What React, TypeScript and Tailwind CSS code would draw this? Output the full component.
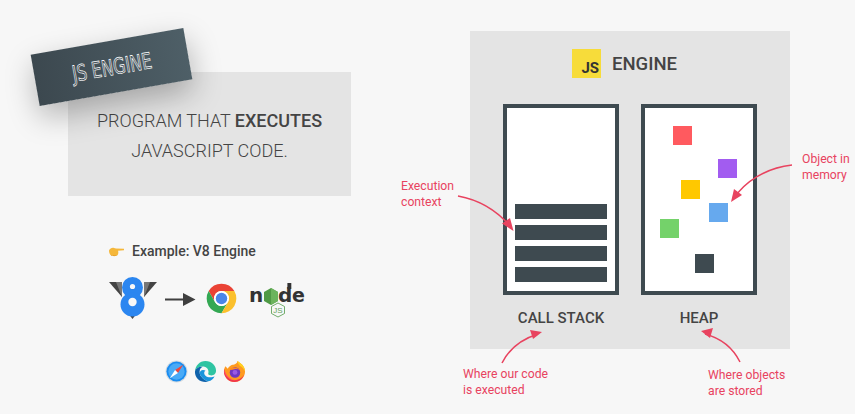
const RED = "#e8435f";

function V8() {
  return (
    <svg width="48" height="42" viewBox="109 278 48 42">
      <path d="M109 283h13v15z" fill="#444" />
      <path d="M157 283h-13v15z" fill="#444" />
      <path d="M116 283h6v15z" fill="#777" />
      <path d="M150 283h-6v15z" fill="#777" />
      <path d="M128 314h9l-4.500 6z" fill="#444" />
      <circle cx="132.500" cy="288.500" r="10.500" fill="#2b86f0" />
      <circle cx="132.500" cy="305.500" r="12" fill="#2b86f0" />
      <circle cx="132.500" cy="287.500" r="2.600" fill="#f7f7f7" />
      <circle cx="132.500" cy="303" r="4.200" fill="#f7f7f7" />
    </svg>
  );
}

function Arrow() {
  return (
    <svg width="31" height="14" viewBox="165 294 31 14">
      <path d="M165 299.500h18V294l12.500 6.500-12.500 6.500v-5.500h-18z" fill="#3f3f3f" />
    </svg>
  );
}

function Chrome() {
  return (
    <svg width="31" height="31" viewBox="1 1 46 46">
      <path d="M24 2A22 22 0 0 1 43.050 13H24A11 11 0 0 0 14.470 29.500L4.950 13A22 22 0 0 1 24 2z" fill="#ea4335" />
      <path d="M4.950 13A22 22 0 0 0 24 46L33.530 29.500A11 11 0 0 1 14.470 29.500z" fill="#34a853" />
      <path d="M43.050 13A22 22 0 0 1 24 46L33.530 29.500A11 11 0 0 0 24 13z" fill="#fbc02d" />
      <circle cx="24" cy="24" r="11" fill="#fff" />
      <circle cx="24" cy="24" r="8.500" fill="#4a86e8" />
    </svg>
  );
}

function Node() {
  return (
    <svg width="56" height="36" viewBox="249 283 56 36">
      <text x="248" y="303" fontFamily="'DejaVu Sans', sans-serif" fontWeight="700" fontSize="20" fill="#333">
        n
      </text>
      <path d="M270 289l7 4v9l-7 4-7-4v-9z" fill="#4f9a45" />
      <path d="M270 289l7 4v9l-7 4z" fill="#6cb45c" />
      <text x="277" y="303" fontFamily="'DejaVu Sans', sans-serif" fontWeight="700" fontSize="20" fill="#333">
        d
      </text>
      <rect x="286.400" y="284" width="3.900" height="6" fill="#333" />
      <text x="291" y="303" fontFamily="'DejaVu Sans', sans-serif" fontWeight="700" fontSize="19" fill="#333">
        e
      </text>
      <path d="M277 304l6.500 3.500v7L277 318l-6.500-3.500v-7z" fill="none" stroke="#62a35a" strokeWidth="0.9" />
      <text x="277" y="314" textAnchor="middle" fontFamily="'Liberation Sans', sans-serif" fontSize="8" fill="#62a35a">
        JS
      </text>
    </svg>
  );
}

function Safari() {
  return (
    <svg width="23" height="23" viewBox="0 0 24 24">
      <circle cx="12" cy="12" r="11.500" fill="#d5dbe0" />
      <circle cx="12" cy="12" r="10.500" fill="#1a8cf0" />
      <circle cx="12" cy="12" r="8.500" fill="#49aaf6" />
      <path d="M19 5L10.500 10.500 13.500 13.500z" fill="#f0453a" />
      <path d="M5 19L10.500 10.500 13.500 13.500z" fill="#fff" />
    </svg>
  );
}

function Edge() {
  return (
    <svg width="23" height="23" viewBox="0 0 24 24">
      <path d="M12 1C18.500 1 23 6 23 11 23 15 20 16.500 17 16 15 15.700 14.500 14.500 15 13.500 15.500 12 15 8 11 7 6 6 1 9 1 12.500 1 6 6 1 12 1z" fill="#2fc4a2" />
      <path d="M1 12.500C1 9 5 6.800 9 7 6 8.500 5.500 11 6 14 7 18 11 21 15 22.300 14 22.800 13 23 12 23 6 23 1 18.500 1 12.500z" fill="#0f62ab" />
      <path d="M6 14C7 18 11 21 15 22.300 18 21.800 20.500 19.500 21.500 17 19 18.500 14 18.500 12 16.500 10 14.500 10.500 12 12 11 8.500 9.500 6 11 6 14z" fill="#1a94dc" />
    </svg>
  );
}

function Firefox() {
  return (
    <svg width="23" height="23" viewBox="0 0 24 24">
      <path d="M15 1C18 3 23 6 23 12 23 18 18 23 12 23 6 23 1 18 1 12 1 10 1.500 8 2.500 6.500L5 9C6 7 8 5.500 10 5 12 4.500 15 4 15 1z" fill="#ff9a1f" />
      <path d="M1.500 9C1.500 15 6 21 12 21 16 21 20 19 22 15.500 20.500 20 16.500 23 12 23 6 23 1 18 1 12 1 11 1.100 10 1.500 9z" fill="#f0344f" />
      <path d="M1.500 9C2 14 6 20 12 20.500 8 21 3 18 1.500 13z" fill="#ff4d6d" />
      <path d="M15 1C18 3 23 6 23 12 21.500 9 20 7 17.500 6 16.500 4 15 3 15 1z" fill="#ffd21f" />
      <circle cx="12.500" cy="13" r="5.500" fill="#6f37c4" />
      <circle cx="12.500" cy="13" r="2.500" fill="#9a5ae6" />
      <path d="M6.500 9.500C9.500 7 15 7 17.500 10.500 15 9 12 9 11 10 9.500 10.500 7.500 10.500 6.500 9.500z" fill="#ff8a1f" />
    </svg>
  );
}

function Hand() {
  return (
    <svg width="15" height="11" viewBox="0 0 15 11">
      <path d="M0 4.500C1 2.500 3 1.500 5 2l2 .5 8 .2v1.600l-6 .5c.5 1 .5 3-.5 4.500C7 10.500 3 10.500 1.500 9 .5 8 0 6 0 4.500z" fill="#f5b73a" />
      <path d="M2 9c2 .6 4 .5 6 0-.5.8-5 1.500-6 0z" fill="#d98a1a" />
    </svg>
  );
}

function Note({ className, lines }: { className: string; lines: string[] }) {
  return (
    <div className={"absolute text-[12.2px] leading-[16px] whitespace-nowrap text-[#e8435f] " + className}>
      {lines.map((l) => (
        <div key={l}>{l}</div>
      ))}
    </div>
  );
}

const squares = [
  { x: 673, y: 126, c: "#ff5a5f" },
  { x: 718, y: 159, c: "#a25cf0" },
  { x: 681, y: 180, c: "#ffc800" },
  { x: 709, y: 203, c: "#66a9ee" },
  { x: 660, y: 219, c: "#74d26a" },
  { x: 695, y: 254, c: "#3e4a50" },
];

export default function App() {
  return (
    <div className="relative flex h-[414px] w-[855px] overflow-hidden bg-[#f7f7f7] font-['Roboto',sans-serif] text-[#444]">
      {/* left column */}
      <div className="flex w-[470px] flex-col pl-[68px] pt-[72px]">
        <div className="flex h-[124px] w-[283px] flex-col items-center bg-[#e4e4e4] pt-[34px] text-[18px] font-light leading-[30px] text-[#444]">
          <div>
            PROGRAM THAT <span className="font-medium">EXECUTES</span>
          </div>
          <div>JAVASCRIPT CODE.</div>
        </div>
        <div className="ml-[41px] mt-[46px] flex h-[18px] items-center gap-[8px] text-[14px] font-medium text-[#444]">
          <Hand />
          <span>Example: V8 Engine</span>
        </div>
        <div className="ml-[41px] mt-[17px] flex items-start">
          <V8 />
          <div className="ml-[8px] mt-[16px]">
            <Arrow />
          </div>
          <div className="ml-[10px] mt-[6px]">
            <Chrome />
          </div>
          <div className="ml-[13px] mt-[5px]">
            <Node />
          </div>
        </div>
        <div className="ml-[97px] mt-[41px] flex gap-[6px]">
          <Safari />
          <Edge />
          <Firefox />
        </div>
      </div>

      {/* right panel */}
      <div className="mt-[31px] flex h-[318px] w-[320px] flex-col bg-[#e4e4e4] pt-[18px]">
        <div className="ml-[102px] flex h-[29px] items-center gap-[11px]">
          <div className="flex h-[29px] w-[29px] items-end justify-end bg-[#f7dc3a] pb-[1px] pr-[2px] text-[15px] font-bold leading-[17px] text-[#333]">
            JS
          </div>
          <span className="mt-[2px] text-[18.5px] font-medium text-[#444]">ENGINE</span>
        </div>
        <div className="ml-[33px] mt-[26px] flex gap-[22px]">
          <div className="flex w-[116px] flex-col">
            <div className="flex h-[191px] flex-col justify-end gap-[6px] border-[4px] border-[#3e4a50] bg-white px-[8px] pb-[9px]">
              <div className="h-[15px] bg-[#3e4a50]" />
              <div className="h-[15px] bg-[#3e4a50]" />
              <div className="h-[15px] bg-[#3e4a50]" />
              <div className="h-[15px] bg-[#3e4a50]" />
            </div>
            <div className="mt-[14px] text-center text-[15px] font-medium leading-[18px] text-[#444]">CALL STACK</div>
          </div>
          <div className="flex w-[116px] flex-col">
            <div className="relative h-[191px] border-[4px] border-[#3e4a50] bg-white">
              {squares.map((s) => (
                <div
                  key={s.c}
                  className="absolute h-[19px] w-[19px]"
                  style={{ left: s.x - 645, top: s.y - 108, backgroundColor: s.c }}
                />
              ))}
            </div>
            <div className="mt-[14px] text-center text-[15px] font-medium leading-[18px] text-[#444]">HEAP</div>
          </div>
        </div>
      </div>

      {/* rotated label */}
      <div className="absolute left-[34px] top-[41px] flex h-[52px] w-[155px] rotate-[-10deg] items-center justify-center bg-gradient-to-r from-[#3c484f] to-[#4e5f67] shadow-[0_12px_30px_rgba(0,0,0,0.28)]">
        <span className="inline-block scale-x-[0.72] font-['DejaVu_Sans',sans-serif] text-[22px] font-normal text-transparent [-webkit-text-stroke:0.7px_#ffffff]">
          JS ENGINE
        </span>
      </div>

      {/* annotations */}
      <Note className="left-[401px] top-[178px]" lines={["Execution", "context"]} />
      <Note className="left-[802px] top-[151px]" lines={["Object in", "memory"]} />
      <Note className="left-[463px] top-[366px]" lines={["Where our code", "is executed"]} />
      <Note className="left-[708px] top-[367px]" lines={["Where objects", "are stored"]} />

      <svg className="pointer-events-none absolute left-0 top-0" width="855" height="414" viewBox="0 0 855 414">
        <g fill="none" stroke={RED} strokeWidth="1.500">
          <path d="M458 196C480 200 498 212 510 226" />
          <path d="M792 165C765 168 745 182 734 198" />
          <path d="M502 363C509 349 522 339 538 334" />
          <path d="M740 362C733 348 720 338 705 334" />
        </g>
        <g fill={RED}>
          <path d="M513.500 231L502 223.500 510 218z" />
          <path d="M731 202L734 189 742 195z" />
          <path d="M542 332L530 330 533 339z" />
          <path d="M701 331L713 328 710 338z" />
        </g>
      </svg>
    </div>
  );
}
